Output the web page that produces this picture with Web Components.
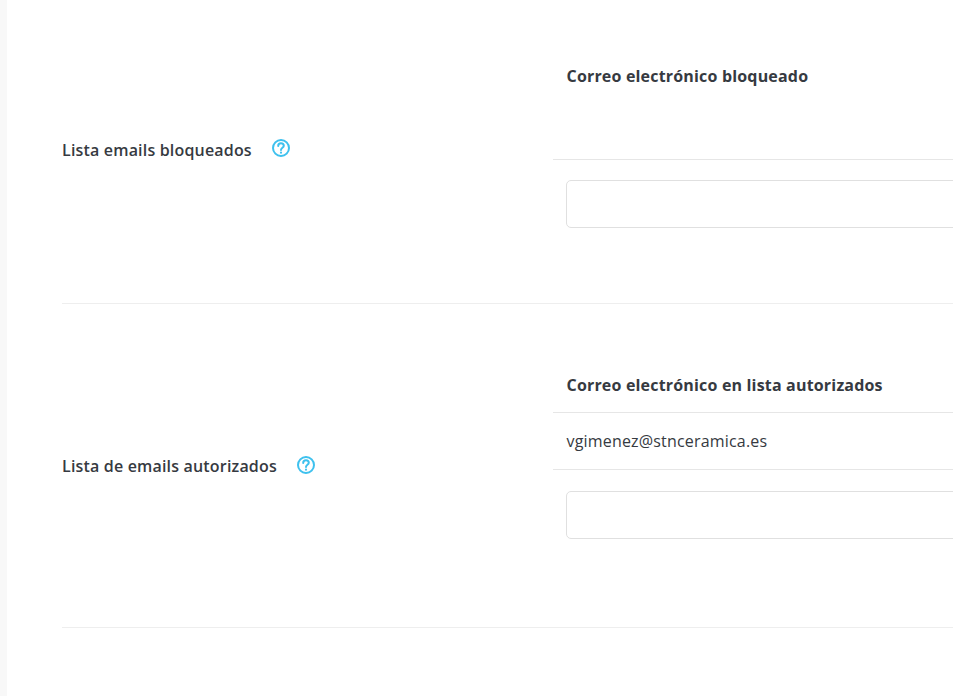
<!DOCTYPE html>
<html lang="es">
<head>
<meta charset="utf-8">
<title>Listas de emails</title>
<style>
  html, body { margin: 0; height: 100%; overflow: hidden; background: #fff; }
  body { font-family: "Open Sans", "Liberation Sans", sans-serif; color: #363a41; }
</style>
</head>
<body>
<settings-panel>
  <email-list-row label="Lista emails bloqueados" heading="Correo electrónico bloqueado" variant="empty"></email-list-row>
  <email-list-row label="Lista de emails autorizados" heading="Correo electrónico en lista autorizados">
    <span>vgimenez@stnceramica.es</span>
  </email-list-row>
</settings-panel>

<script>
// Outer page frame: grey strip on the left, white panel with the rows
class SettingsPanel extends HTMLElement {
  constructor() {
    super();
    this.attachShadow({ mode: 'open' });
    this.shadowRoot.innerHTML = `
      <style>
        :host {
          display: block;
          height: 696px;
          width: 953px;
          overflow: hidden;
          background: #f8f8f8;
        }
        .panel {
          margin-left: 7px;
          width: 1300px;
          height: 100%;
          background: #fff;
          padding-left: 55px;
          box-sizing: border-box;
        }
      </style>
      <div class="panel"><slot></slot></div>
    `;
  }
}

// Help icon, circle with a question mark
class HelpIcon extends HTMLElement {
  constructor() {
    super();
    this.attachShadow({ mode: 'open' });
    this.shadowRoot.innerHTML = `
      <style>
        :host { display: inline-flex; width: 20px; height: 20px; margin-bottom: 2px; }
        svg { display: block; }
      </style>
      <svg width="20" height="20" viewBox="0 0 20 20" fill="none" stroke="#3ec1ee" stroke-width="2" stroke-linecap="round">
        <circle cx="10" cy="10" r="8"/>
        <path d="M7.2 7.9c0-1.7 1.2-2.7 2.8-2.7 1.6 0 2.8 1 2.8 2.5 0 2.1-2.8 2-2.8 4.2"/>
        <path d="M10 14.6v.1" stroke-width="2.1"/>
      </svg>
    `;
  }
}

// One setting: label with help icon on the left, table and input on the right
class EmailListRow extends HTMLElement {
  constructor() {
    super();
    this.attachShadow({ mode: 'open' });
  }

  connectedCallback() {
    const empty = this.getAttribute('variant') === 'empty';
    this.shadowRoot.innerHTML = `
      <style>
        :host {
          display: grid;
          grid-template-columns: 491px 1fr;
          align-items: center;
          border-bottom: 1px solid #eeeeee;
          font-size: 16px;
          line-height: 24px;
          letter-spacing: 0.18px;
        }
        :host([variant="empty"]) { height: 303px; }
        :host(:not([variant="empty"])) { height: 323px; }
        .label {
          display: flex;
          align-items: center;
          gap: 19px;
          font-weight: 600;
          color: #363a41;
        }
        .list { display: flex; flex-direction: column; }
        .head {
          padding: 0 13.5px;
          font-weight: 700;
          border-bottom: 1px solid #e6e6e6;
        }
        .body {
          padding: 0 13.5px;
          border-bottom: 1px solid #e6e6e6;
          height: 56px;
          display: flex;
          align-items: center;
        }
        .field { padding: 20px 13px 0; }
        .field div {
          height: 46px;
          border: 1px solid #e0e0e0;
          border-radius: 5px;
          background: #fff;
        }
        .empty .head { height: 95px; }
        .empty .body { display: none; }
        .full .head { height: 39px; }
        .full .field { padding-top: 21px; }
        /* first row: text sits a pixel lower than its icon */
        :host([variant="empty"]) .label { margin-bottom: 4px; }
        :host([variant="empty"]) help-icon { margin-bottom: 4px; }
        .empty { margin-bottom: 12px; }
        .full { margin-bottom: 19px; }
      </style>
      <div class="label">
        <span>${this.getAttribute('label')}</span>
        <help-icon></help-icon>
      </div>
      <div class="list ${empty ? 'empty' : 'full'}">
        <div class="head">${this.getAttribute('heading')}</div>
        <div class="body"><slot></slot></div>
        <div class="field"><div></div></div>
      </div>
    `;
  }
}

customElements.define('help-icon', HelpIcon);
customElements.define('email-list-row', EmailListRow);
customElements.define('settings-panel', SettingsPanel);
</script>
</body>
</html>
